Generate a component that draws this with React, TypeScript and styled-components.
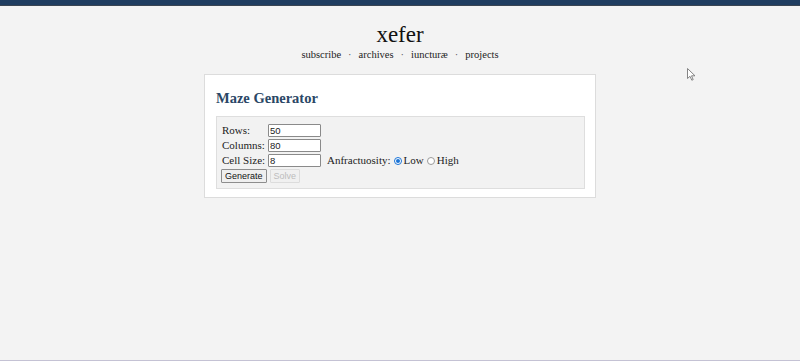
import styled, { createGlobalStyle } from 'styled-components';

const Global = createGlobalStyle`
  html, body {
    margin: 0;
    padding: 0;
    background: #f3f3f3;
    height: 361px;
    overflow: hidden;
  }
  body {
    font-family: 'Liberation Serif', 'DejaVu Serif', serif;
    color: #222;
  }
`;

const Page = styled.div`
  position: relative;
  height: 361px;
  display: flex;
  flex-direction: column;
  align-items: center;
`;

const TopBar = styled.div`
  align-self: stretch;
  height: 5px;
  background: #1f3d60;
  border-bottom: 1px solid #3a4552;
`;

const Masthead = styled.header`
  margin-top: 17px;
  display: flex;
  flex-direction: column;
  align-items: center;
`;

const Title = styled.h1`
  margin: 0;
  font-weight: normal;
  font-size: 23px;
  line-height: 24px;
  color: #111;
`;

const Nav = styled.nav`
  margin-top: 1px;
  display: flex;
  gap: 7px;
  font-size: 10.5px;
  line-height: 13px;
  color: #222;
`;

const Dot = styled.span`
  color: #555;
`;

const Card = styled.section`
  margin-top: 13px;
  width: 392px;
  box-sizing: border-box;
  background: #fff;
  border: 1px solid #dcdcdc;
  padding: 14px 10px 8px 11px;
`;

const Heading = styled.h2`
  margin: 0 0 9px;
  font-family: 'Liberation Serif', 'DejaVu Serif', serif;
  font-size: 14.5px;
  line-height: 18px;
  font-weight: bold;
  color: #2a4766;
`;

const Fieldset = styled.div`
  background: #f2f2f2;
  border: 1px solid #dedede;
  padding: 6px 5px 5px 5px;
  display: flex;
  flex-direction: column;
  gap: 1px;
`;

const Row = styled.div`
  display: flex;
  align-items: center;
  height: 14px;
  font-size: 11px;
`;

const Label = styled.label`
  width: 46px;
  white-space: nowrap;
`;

const Input = styled.input`
  width: 53px;
  height: 13px;
  box-sizing: border-box;
  margin: 0;
  padding: 0 1px;
  border: 1px solid #8a8a8a;
  border-radius: 1px;
  background: #fff;
  font-family: 'Liberation Sans', Arial, sans-serif;
  font-size: 9.5px;
  color: #222;
`;

const Extra = styled.span`
  margin-left: 6px;
  display: flex;
  align-items: center;
  font-size: 11px;
`;

const Radio = styled.span<{ $on?: boolean }>`
  width: 6px;
  height: 6px;
  border-radius: 50%;
  border: 1px solid ${({ $on }) => ($on ? '#1a73d6' : '#9a9a9a')};
  background: #fff;
  margin: 1px 2px 0 3px;
  display: inline-flex;
  align-items: center;
  justify-content: center;
  &::after {
    content: '';
    width: 4px;
    height: 4px;
    border-radius: 50%;
    background: ${({ $on }) => ($on ? '#1a73d6' : 'transparent')};
  }
`;

const Buttons = styled.div`
  display: flex;
  gap: 3px;
  margin-top: 1px;
  margin-left: -1px;
`;

const Button = styled.button`
  height: 14px;
  box-sizing: border-box;
  margin: 0;
  padding: 0 3px;
  font-family: 'Liberation Sans', Arial, sans-serif;
  font-size: 9px;
  line-height: 12px;
  color: #111;
  background: #efefef;
  border: 1px solid #8d8d8d;
  border-radius: 1px;
  &:disabled {
    color: #bcbcbc;
    border-color: #dcdcdc;
    background: #f0f0f0;
  }
`;

const Cursor = styled.svg`
  position: absolute;
  left: 687px;
  top: 68px;
`;

const BottomLine = styled.div`
  position: absolute;
  left: 0;
  right: 0;
  bottom: 0;
  height: 1px;
  background: #c4c2d4;
`;

export default function App() {
  return (
    <Page>
      <Global />
      <TopBar />
      <Masthead>
        <Title>xefer</Title>
        <Nav>
          <span>subscribe</span>
          <Dot>·</Dot>
          <span>archives</span>
          <Dot>·</Dot>
          <span>iuncturæ</span>
          <Dot>·</Dot>
          <span>projects</span>
        </Nav>
      </Masthead>
      <Card>
        <Heading>Maze Generator</Heading>
        <Fieldset>
          <Row>
            <Label>Rows:</Label>
            <Input defaultValue="50" />
          </Row>
          <Row>
            <Label>Columns:</Label>
            <Input defaultValue="80" />
          </Row>
          <Row>
            <Label>Cell Size:</Label>
            <Input defaultValue="8" />
            <Extra>
              Anfractuosity:
              <Radio $on />
              Low
              <Radio />
              High
            </Extra>
          </Row>
          <Buttons>
            <Button>Generate</Button>
            <Button disabled>Solve</Button>
          </Buttons>
        </Fieldset>
      </Card>
      <Cursor width="9" height="13" viewBox="0 0 9 13">
        <path d="M0.5 0.5 L0.5 10.5 L3 8.3 L4.8 12.2 L6.2 11.6 L4.5 7.8 L8 7.8 Z" fill="#fff" stroke="#777" strokeWidth="0.9" />
      </Cursor>
      <BottomLine />
    </Page>
  );
}
